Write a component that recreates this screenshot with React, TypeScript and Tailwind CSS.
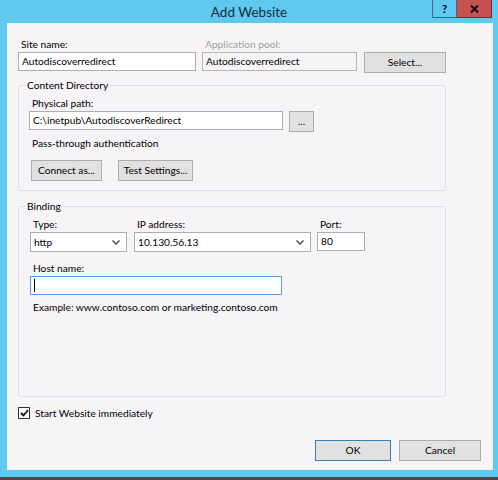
import React from "react";

function Btn({ w, children, blue }: { w: string; children: React.ReactNode; blue?: boolean }) {
  return (
    <div
      className={`${w} h-[21px] flex items-center justify-center whitespace-nowrap bg-[#e1e1e1] border ${
        blue ? "border-[#3c7fb1]" : "border-[#adadad]"
      } text-[10.2px] text-black leading-none`}
    >
      {children}
    </div>
  );
}

function Field({ w, children, bg = "bg-white", border = "border-[#abadb3]", h = "h-[19px]" }: { w: string; children?: React.ReactNode; bg?: string; border?: string; h?: string }) {
  return (
    <div className={`${w} ${h} ${bg} border ${border} flex items-center px-[3px] whitespace-nowrap text-[10.2px] text-black leading-none`}>
      {children}
    </div>
  );
}

function Select({ w, value }: { w: string; value: string }) {
  return (
    <div className={`${w} h-[20px] bg-white border border-[#abadb3] flex items-center pl-[3px] pr-[6px] text-[10.2px] text-black leading-none`}>
      <span className="flex-1">{value}</span>
      <svg width="8" height="5" viewBox="0 0 8 5">
        <path d="M0.5 0.5 L4 4 L7.5 0.5" fill="none" stroke="#444" strokeWidth="1.3" />
      </svg>
    </div>
  );
}

function Label({ children, gray }: { children: React.ReactNode; gray?: boolean }) {
  return (
    <div className={`h-[14px] leading-[14px] text-[10.2px] pl-[3px] whitespace-nowrap ${gray ? "text-[#a0a0a0]" : "text-black"}`}>{children}</div>
  );
}

export default function App() {
  return (
    <div className="w-[498px] h-[480px] bg-[#5fc9f0] flex flex-col overflow-hidden font-['Lato','Noto_Sans',sans-serif]">
      {/* Title bar */}
      <div className="relative h-[23px] flex items-center justify-center">
        <span className="text-[13.5px] text-[#1b2b3a] leading-none mt-[3px]">Add Website</span>
        <div className="absolute top-0 right-[6px] flex">
          <div className="w-[25px] h-[18px] border border-[#2f6e8e] border-t-0 bg-[#5fc9f0] flex items-center justify-center text-[11px] font-bold text-black leading-none">
            ?
          </div>
          <div className="w-[35px] h-[18px] border border-[#7d2b2b] border-t-0 border-l-0 bg-[#c75050] flex items-center justify-center">
            <svg width="9" height="8" viewBox="0 0 9 8">
              <path d="M1 0.5 L8 7.5 M8 0.5 L1 7.5" stroke="#111" strokeWidth="2" />
            </svg>
          </div>
        </div>
      </div>

      {/* Client */}
      <div className="ml-[7px] w-[486px] h-[447px] bg-[#f7f4f7] flex flex-col pl-[11px] pt-[14px]">
        {/* Row 1 */}
        <div className="flex items-start">
          <div className="flex flex-col w-[178px]">
            <Label>Site name:</Label>
            <div className="mt-[1px]">
              <Field w="w-[178px]" h="h-[19px]">Autodiscoverredirect</Field>
            </div>
          </div>
          <div className="flex flex-col ml-[6px] w-[155px]">
            <Label gray>Application pool:</Label>
            <div className="mt-[1px]">
              <Field w="w-[155px]" bg="bg-[#f7f4f7]" border="border-[#b5b5b5]">Autodiscoverredirect</Field>
            </div>
          </div>
          <div className="ml-[7px] mt-[15px]">
            <Btn w="w-[82px]">Select...</Btn>
          </div>
        </div>

        {/* Content Directory */}
        <div className="relative mt-[12px] w-[428px] h-[106px] border border-[#dcdfe4] rounded-[3px] pl-[10px] pt-[10px] flex flex-col">
          <span className="absolute -top-[8px] left-[6px] px-[2px] bg-[#f7f4f7] text-[10.2px] leading-[14px] text-black whitespace-nowrap">Content Directory</span>
          <Label>Physical path:</Label>
          <div className="flex items-start mt-[1px]">
            <Field w="w-[254px]">C:\inetpub\AutodiscoverRedirect</Field>
            <div className="ml-[6px]">
              <div className="w-[25px] h-[21px] flex items-center justify-center bg-[#e1e1e1] border border-[#adadad] text-[10px] leading-none pb-[2px]">...</div>
            </div>
          </div>
          <div className="mt-[4px] h-[14px] leading-[14px] text-[10.2px] pl-[3px] whitespace-nowrap">Pass-through authentication</div>
          <div className="flex mt-[10px] pl-[2px]">
            <Btn w="w-[71px]">Connect as...</Btn>
            <div className="ml-[16px]">
              <Btn w="w-[75px]">Test Settings...</Btn>
            </div>
          </div>
        </div>

        {/* Binding */}
        <div className="relative mt-[15px] w-[428px] h-[191px] border border-[#dcdfe4] rounded-[3px] pl-[11px] pt-[10px] flex flex-col">
          <span className="absolute -top-[8px] left-[6px] px-[2px] bg-[#f7f4f7] text-[10.2px] leading-[14px] text-black">Binding</span>
          <div className="flex items-start">
            <div className="flex flex-col">
              <Label>Type:</Label>
              <div className="mt-[1px]">
                <Select w="w-[97px]" value="http" />
              </div>
            </div>
            <div className="flex flex-col ml-[7px]">
              <Label>IP address:</Label>
              <div className="mt-[1px]">
                <Select w="w-[177px]" value="10.130.56.13" />
              </div>
            </div>
            <div className="flex flex-col ml-[6px]">
              <Label>Port:</Label>
              <div className="mt-[1px]">
                <Field w="w-[48px]">80</Field>
              </div>
            </div>
          </div>
          <div className="mt-[9px]">
            <Label>Host name:</Label>
          </div>
          <div className="mt-[1px]">
            <Field w="w-[252px]" border="border-[#569de5]">
              <span className="w-[1px] h-[13px] bg-black" />
            </Field>
          </div>
          <div className="mt-[5px] h-[14px] leading-[14px] text-[10.2px] pl-[3px] whitespace-nowrap">Example: www.contoso.com or marketing.contoso.com</div>
        </div>

        {/* Checkbox */}
        <div className="flex items-center mt-[10px] h-[12px]">
          <div className="w-[12px] h-[12px] border border-[#333] bg-white flex items-center justify-center">
            <svg width="9" height="8" viewBox="0 0 9 8">
              <path d="M1 4 L3.5 6.5 L8 1" fill="none" stroke="#111" strokeWidth="1.8" />
            </svg>
          </div>
          <span className="ml-[5px] text-[10.2px] leading-[14px] whitespace-nowrap">Start Website immediately</span>
        </div>

        {/* Bottom buttons */}
        <div className="flex mt-[21px] pl-[297px]">
          <Btn w="w-[76px]" blue>OK</Btn>
          <div className="ml-[8px]">
            <Btn w="w-[82px]">Cancel</Btn>
          </div>
        </div>
      </div>
      <div className="h-[7px]" />
      <div className="flex-1 bg-[#4a4a4a]" />
    </div>
  );
}
